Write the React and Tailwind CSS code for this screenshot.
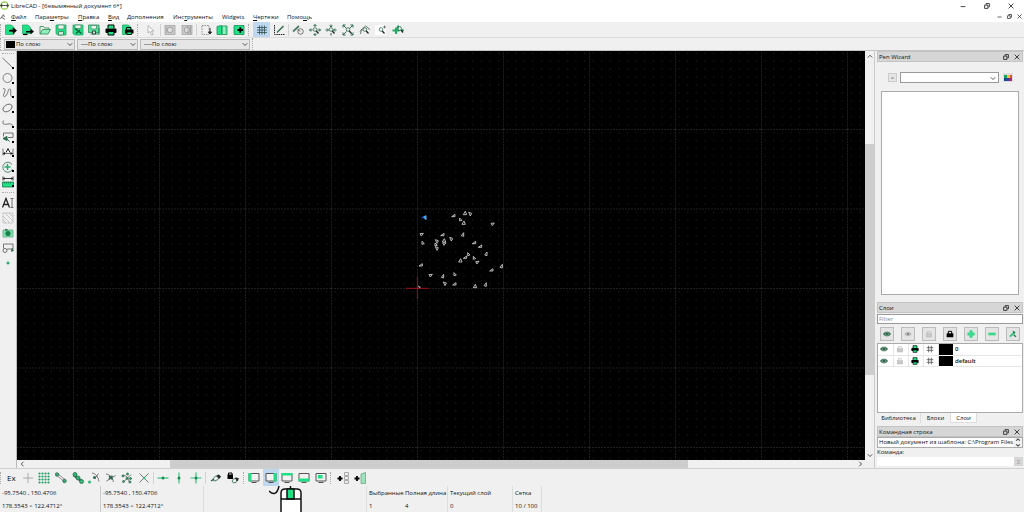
import React from "react";

const G = "#1fe085";
const D = "#2f6b4c";
const K = "#222";

function Icon({ children, size = "size-3" }) {
  return (
    <svg viewBox="0 0 24 24" className={`${size} shrink-0`} fill="none" stroke={K} strokeWidth="1.6" aria-hidden="true">
      {children}
    </svg>
  );
}

const magnifier = (
  <>
    <circle cx="12" cy="11" r="3.6" stroke={D} />
    <path d="M14.5 14l4.5 5" strokeWidth="2.6" />
  </>
);

const icons = {
  newDoc: (
    <>
      <path d="M1 2h12l5 5v14H1z" fill={G} stroke="#27b070" />
      <path d="M8 12h8v-5l8 6-8 7v-5H8z" fill="#000" stroke="none" />
      <path d="M9 13h13M17 8v11" strokeWidth="3" stroke="#000" />
    </>
  ),
  newTemplate: (
    <>
      <path d="M1 2h11l5 5v12H1z" fill={G} stroke="#27b070" />
      <path d="M8 14h9V9l7 6-7 6v-4H8z" fill="#000" stroke="none" />
      <path d="M2 21h9" stroke="#000" strokeWidth="2.4" />
    </>
  ),
  open: (
    <>
      <path d="M2 20V5h7l2 3h9v3" stroke="#27864f" />
      <path d="M2 20l5-9h16l-5 9z" fill="#8df0bd" stroke="#27864f" />
    </>
  ),
  save: (
    <>
      <path d="M2 2h20v20H5l-3-3z" fill={G} stroke="#27a565" />
      <path d="M6 2h12v8H6z" fill="#e9f5ee" stroke="#4d8d6b" />
      <path d="M7 15h10v7H7z" fill="#d0e8db" stroke="#397f5a" />
    </>
  ),
  saveAs: (
    <>
      <path d="M2 2h20v20H5l-3-3z" fill={G} stroke="#27a565" />
      <path d="M6 2h12v7H6z" fill="#e9f5ee" stroke="#4d8d6b" />
      <path d="M6 9l13 10M8 19l8-7" stroke="#14573a" strokeWidth="2.6" />
    </>
  ),
  saveAll: (
    <>
      <path d="M1 2h21v15H1z" fill="#4fe79c" stroke="#2b8c5a" />
      <path d="M6 3h11v7H6z" fill="#eef8f2" stroke="#4d8d6b" />
      <path d="M5 20h17V8" stroke="#2b8c5a" strokeWidth="2.4" />
      <path d="M9 14h6v6H9z" fill="#cfe9db" />
    </>
  ),
  print: (
    <>
      <path d="M6 9V2h12v7" fill={G} stroke="#000" strokeWidth="2" />
      <rect x="1" y="9" width="22" height="9" rx="2" fill="#000" stroke="none" />
      <path d="M6 15h12v7H6z" fill={G} stroke="#000" strokeWidth="2" />
    </>
  ),
  preview: (
    <>
      <path d="M1 2h12l4 4v15H1z" fill={G} stroke="#27a565" />
      <path d="M9 12V7h9v5" fill={G} stroke="#000" strokeWidth="2" />
      <rect x="6" y="11" width="17" height="8" rx="1" fill="#000" stroke="none" />
      <path d="M10 16h9v5h-9z" fill={G} stroke="#000" />
    </>
  ),
  pointer: <path d="M8 3v15l4-3 3 7 3-1-3-7h5z" stroke="#aaa" fill="#f8f8f8" />,
  blockGray: (
    <>
      <rect x="2" y="3" width="20" height="18" fill="#c8c8c8" stroke="#a8a8a8" />
      <circle cx="12" cy="12" r="5.5" stroke="#999" fill="#dedede" />
      <path d="M5 6v12" stroke="#aaa" />
    </>
  ),
  blockGray2: (
    <>
      <rect x="2" y="3" width="20" height="18" fill="#c8c8c8" stroke="#a8a8a8" />
      <circle cx="12" cy="12" r="5.5" stroke="#999" fill="#dedede" />
      <path d="M14 3v18M19 3v18" stroke="#999" />
    </>
  ),
  selectDown: (
    <>
      <path d="M4 3h14v18H4z" stroke="#777" strokeDasharray="3 2" />
      <path d="M20 8v10M17 16l3 4 3-4z" fill={K} strokeWidth="2" />
    </>
  ),
  book: (
    <>
      <path d="M2 5l9-2v18H2z" fill={G} stroke="#1c8b55" />
      <path d="M12 4h10v17H12z" fill="#5ce6a1" stroke="#1c8b55" />
      <path d="M16 5v15" stroke="#c8f5de" strokeWidth="2" />
    </>
  ),
  addBlock: (
    <>
      <path d="M2 3h20v18H2z" fill={G} stroke="#1c8b55" />
      <path d="M9 12h11M14.5 6.5v11" stroke="#000" strokeWidth="4" />
    </>
  ),
  grid: <path d="M7 3v18M12 3v18M17 3v18M2 7h20M2 12h20M2 17h20" stroke="#355" strokeWidth="1.7" />,
  draft: (
    <>
      <path d="M3 2v19h20" strokeDasharray="3 1.5" strokeWidth="2" />
      <path d="M8 17L21 4" stroke={D} strokeWidth="3" />
    </>
  ),
  redraw: (
    <>
      <circle cx="17" cy="15" r="5.5" stroke="#555" />
      <path d="M2 15L14 4" stroke="#4f7d66" strokeWidth="3.5" />
      <path d="M12 11l4 4" />
    </>
  ),
  zoomIn: (
    <>
      {magnifier}
      <path d="M12 1v5M12 23v-5M1 12h6M17 12h6M9 4l3-3 3 3M4 9l-3 3 3 3M20 9l3 3-3 3M9 20l3 3 3-3" stroke={D} strokeWidth="2" />
    </>
  ),
  zoomOut: (
    <>
      {magnifier}
      <path d="M12 1v5M12 23v-5M1 12h6M17 12h6M9 3l3 3 3-3M4 9l3 3-3 3M20 9l-3 3 3 3" stroke={D} strokeWidth="2" />
    </>
  ),
  zoomAuto: (
    <>
      {magnifier}
      <path d="M2 2l7 7M22 2l-7 7M2 22l7-7M22 22l-5-5M2 7V2h5M17 2h5v5M2 17v5h5M17 22h5v-5" stroke={D} strokeWidth="2" />
    </>
  ),
  zoomPrev: (
    <>
      {magnifier}
      <path d="M3 20l2-9 8-7 6 4 2 4M2 15l3-4 4 2" stroke="#4b6658" />
    </>
  ),
  zoomWin: (
    <>
      <path d="M0 2h22v20H0z" fill="#fff" stroke="none" />
      {magnifier}
      <path d="M19 3v6M16 6h6" stroke="#555" />
    </>
  ),
  zoomPan: (
    <>
      <path d="M1 13h14M8 7v13M12 3v6M20 11l3 3" stroke="#20a963" strokeWidth="4" />
      <circle cx="15" cy="9" r="4" stroke={D} />
      <path d="M18 12l4 5" strokeWidth="2.5" />
    </>
  ),
  line: <path d="M1 2l20 19" stroke="#555" />,
  circle: <circle cx="11" cy="12" r="9" stroke="#666" />,
  curve: <path d="M2 4c5-3 5 3 2 9s1 9 5 3 3-13 7-12-2 14 5 16" stroke="#555" />,
  ellipse: <ellipse cx="11" cy="12" rx="10" ry="6.5" transform="rotate(-32 11 12)" stroke="#555" />,
  polyline: <path d="M3 7c-4 9 3 8 9 7 8-1 9 1 9 5" stroke="#555" />,
  modify: (
    <>
      <path d="M3 11V4h19v9H12" stroke="#555" />
      <path d="M2 15l8-4v8zM9 15l6 6" fill={D} stroke={D} strokeWidth="2" />
    </>
  ),
  dimension: (
    <>
      <path d="M2 5v14M22 5v14M2 15h20" stroke="#555" />
      <path d="M8 13l4-8 4 8" stroke={K} strokeWidth="2" />
      <path d="M1 15l5-3v6zM22 15l-5-3v6z" fill={K} stroke="none" />
    </>
  ),
  info: (
    <>
      <path d="M20 7a10 10 0 1 0 1 9" stroke={D} />
      <path d="M11 6v12M5 12h12" stroke="#25ad6b" strokeWidth="3" />
    </>
  ),
  measure: (
    <>
      <path d="M2 1v8M22 1v8M2 5h20M5 3v4M19 3v4" strokeWidth="1.8" />
      <path d="M1 12h22v10H1z" fill={G} stroke="#15804c" />
      <path d="M5 12v3M9 12v3M13 12v3M17 12v3" stroke="#15804c" />
    </>
  ),
  mtext: (
    <>
      <path d="M1 21L8 3l7 18M4 15h8" strokeWidth="2.6" />
      <path d="M20 3v18M17 3h6M17 21h6" stroke="#555" />
    </>
  ),
  hatch: <path d="M2 2h20v20H2zM2 8l14 14M2 16l6 6M6 2l16 16M14 2l8 8" stroke="#a7a7a7" strokeDasharray="2 1" />,
  image: (
    <>
      <path d="M2 6h20v14H2z" fill="#7be0ab" stroke="#70a88a" />
      <path d="M6 4h5v3H6z" fill={D} stroke="none" />
      <circle cx="12" cy="13" r="4.5" fill="#17804a" stroke="#17804a" />
    </>
  ),
  insert: (
    <>
      <path d="M3 13V4h19v10H10" stroke="#555" />
      <circle cx="6" cy="17" r="4" stroke="#555" />
      <path d="M20 13l3 4-4 2z" fill={D} stroke={D} />
    </>
  ),
  point: <circle cx="12" cy="12" r="3" fill="#29a86c" stroke="none" />,
  cross: <path d="M12 2v20M2 12h20" stroke="#999" />,
  snapGrid: (
    <g fill="#249c62" stroke="none">
      {[3, 9, 15, 21].map((x) => [3, 9, 15, 21].map((y) => <circle key={`${x}-${y}`} cx={x} cy={y} r="2.2" />))}
    </g>
  ),
  endpoint: (
    <>
      <path d="M6 4l14 11M4 7l13 11" stroke="#777" />
      <circle cx="4" cy="5" r="3.5" fill="#39ad74" stroke={D} />
      <circle cx="19" cy="18" r="3.5" fill="#39ad74" stroke={D} />
    </>
  ),
  onEntity: (
    <>
      <path d="M3 6l17 13" stroke={D} strokeWidth="5" />
      <circle cx="6" cy="5" r="4" fill="#2dbb75" stroke={D} />
      <circle cx="12" cy="12" r="4" fill="#2dbb75" stroke={D} />
      <circle cx="19" cy="19" r="4" fill="#2dbb75" stroke={D} />
    </>
  ),
  center: (
    <>
      <path d="M8 2c7 1 12 7 14 17M13 14l8-11" stroke="#555" />
      <circle cx="3" cy="20" r="3" fill="#2dbb75" stroke="none" />
      <circle cx="13" cy="11" r="3" fill={D} stroke="none" />
    </>
  ),
  middle: (
    <>
      <path d="M2 4c8 1 13 7 15 16M3 18L21 7" stroke="#555" />
      <path d="M8 8l7 7M8 14l7-6" stroke={D} strokeWidth="3.5" />
    </>
  ),
  distance: (
    <>
      <path d="M2 7c8-2 13 4 15 15M5 20L20 5" stroke="#555" />
      <g fill="#28a868" stroke={D}>
        <circle cx="4" cy="8" r="2" /><circle cx="13" cy="4" r="2" /><circle cx="19" cy="13" r="2" />
        <circle cx="12" cy="13" r="2" /><circle cx="5" cy="19" r="2" /><circle cx="18" cy="20" r="2" />
      </g>
    </>
  ),
  intersect: (
    <>
      <path d="M3 3l18 18M21 3L3 21" stroke="#555" />
      <circle cx="12" cy="12" r="2.5" fill="#2dbb75" stroke="none" />
    </>
  ),
  restrictH: (
    <>
      <path d="M1 12h22" stroke="#35c27f" strokeWidth="2.4" />
      <circle cx="12" cy="12" r="3" fill="#178b52" stroke="none" />
    </>
  ),
  restrictV: (
    <>
      <path d="M12 1v22" stroke="#35c27f" strokeWidth="2.4" />
      <circle cx="12" cy="12" r="3" fill="#178b52" stroke="none" />
    </>
  ),
  restrictO: (
    <>
      <path d="M12 1v22M1 12h22" stroke="#35c27f" strokeWidth="2.4" />
      <circle cx="12" cy="12" r="3" fill="#178b52" stroke="none" />
    </>
  ),
  relZero: (
    <>
      <path d="M2 18l6-4" stroke={D} strokeWidth="3" />
      <ellipse cx="13" cy="12" rx="8" ry="4" transform="rotate(-35 13 12)" stroke={D} />
      <path d="M14 9l4 4 3-4-4-3z" fill={K} />
    </>
  ),
  lockZero: (
    <>
      <rect x="1" y="5" width="11" height="9" fill="#000" stroke="none" />
      <path d="M3 6V2h7v4" stroke="#000" strokeWidth="2" />
      <ellipse cx="16" cy="17" rx="6" ry="4" transform="rotate(-30 16 17)" stroke={D} />
      <path d="M17 12l3 6 3-5z" fill={K} />
    </>
  ),
  plusList: (
    <>
      <path d="M1 13h10M6 8v10" stroke="#000" strokeWidth="3.6" />
      <path d="M15 1h8v6h-8zM15 9h8v6h-8zM15 17h8v6h-8z" fill="#ececec" stroke="#999" />
    </>
  ),
  plusGreen: (
    <>
      <path d="M1 13h10M6 8v10" stroke="#000" strokeWidth="3.6" />
      <path d="M14 4l9-3v22h-9z" fill="#9be3bd" stroke="#69a886" />
    </>
  ),
  eye: (
    <>
      <path d="M1 12c5-8 17-8 22 0-5 8-17 8-22 0z" fill="#39805c" stroke="#2c5b44" />
      <circle cx="12" cy="12" r="4" fill="#0b2a1a" stroke="#b5d8c5" />
    </>
  ),
  eyeGray: (
    <>
      <path d="M2 12c5-7 15-7 20 0-5 7-15 7-20 0z" fill="#bbb" stroke="#aaa" />
      <circle cx="12" cy="12" r="3" fill="#777" stroke="none" />
    </>
  ),
  lockGray: (
    <>
      <rect x="4" y="11" width="16" height="10" fill="#c9c9c9" stroke="#b5b5b5" />
      <path d="M7 11V5h9v3" stroke="#b5b5b5" strokeWidth="2" />
    </>
  ),
  lock: (
    <>
      <rect x="2" y="10" width="20" height="12" rx="1" fill="#000" stroke="none" />
      <path d="M7 11V4h10v7" stroke="#000" strokeWidth="3" />
    </>
  ),
  plus: <path d="M12 1v22M1 12h22" stroke="#38d98a" strokeWidth="9" />,
  minus: <path d="M1 12h22" stroke="#38d98a" strokeWidth="8" />,
  edit: (
    <>
      <path d="M3 20L17 6" stroke="#38c27f" strokeWidth="6" />
      <path d="M12 4l6 6M14 14l7 6" stroke="#217d4e" strokeWidth="4" />
    </>
  ),
  hash: <path d="M8 2v20M16 2v20M2 8h20M2 16h20" stroke="#555" strokeWidth="2.4" />,
};

function monitor(fill) {
  return (
    <>
      <path d="M2 3h20v15H2z" fill="#f2f2f2" stroke="#555" strokeWidth="2" />
      <path d={fill} fill={G} stroke="none" />
      <path d="M7 21h10" stroke="#555" strokeWidth="2" />
    </>
  );
}
icons.dockLeft = monitor("M1 2h6v17H1z");
icons.dockRight = monitor("M17 2h6v17h-6z");
icons.dockTop = monitor("M1 2h22v5H1z");
icons.dockBottom = monitor("M1 13h22v6H1z");
icons.dockFloat = monitor("M6 6h9v7H6z");

function Tool({ name, label, active, menu }) {
  return (
    <button
      type="button"
      aria-label={label}
      aria-pressed={active}
      className={`relative flex min-w-0 flex-1 items-center justify-center ${active ? "bg-[#bfd8f0]" : ""}`}
    >
      {name ? <Icon>{icons[name]}</Icon> : <span className="text-[8px]">{label}</span>}
      {menu && <span className="absolute right-0.5 bottom-0.5 size-[2px] bg-black" />}
    </button>
  );
}

const Handle = () => <span className="h-3 w-[2px] shrink-0 border-l border-dotted border-[#aaa]" />;
const Sep = () => <span className="h-3 w-px shrink-0 bg-[#d2d2d2]" />;

function Group({ width, items }) {
  return (
    <div className={`flex h-full shrink-0 ${width}`}>
      {items.map(([name, label, active]) => (
        <Tool key={label} name={name} label={label} active={active} />
      ))}
    </div>
  );
}

const Chevron = ({ d = "M1 3l3 3 3-3" }) => (
  <svg viewBox="0 0 8 8" className="size-[6px] shrink-0" fill="none" stroke="#444" strokeWidth="1.2" aria-hidden="true">
    <path d={d} />
  </svg>
);

function PenCombo({ width, label, children }) {
  return (
    <div className={`relative flex h-[11px] items-center border border-[#b9b9b9] bg-[#e6e6e6] px-px ${width}`}>
      {children}
      <select aria-label={label} className="h-full min-w-0 flex-1 appearance-none bg-transparent leading-none outline-none">
        <option>По слою</option>
      </select>
      <Chevron />
    </div>
  );
}

const RestoreGlyph = ({ size = "size-[6px]" }) => (
  <svg viewBox="0 0 10 10" className={size} fill="none" stroke="#222" strokeWidth="1.4" aria-hidden="true">
    <path d="M1 3.5h5.5V9H1zM3.5 3V1H9v5.5H7" />
  </svg>
);
const CloseGlyph = ({ size = "size-[6px]" }) => (
  <svg viewBox="0 0 10 10" className={size} fill="none" stroke="#222" strokeWidth="1.4" aria-hidden="true">
    <path d="M1 1l8 8M9 1L1 9" />
  </svg>
);
const MinGlyph = ({ size = "size-[6px]" }) => (
  <svg viewBox="0 0 10 10" className={size} fill="none" stroke="#222" strokeWidth="1.4" aria-hidden="true">
    <path d="M1 6h8" />
  </svg>
);

function DockTitle({ title }) {
  return (
    <div className="flex h-[11px] shrink-0 items-center border border-[#c3c3c3] bg-[#d6d6d6] pr-0.5 pl-px">
      <h2 className="flex-1">{title}</h2>
      <button type="button" aria-label={`Открепить ${title}`} className="mr-[5px]"><RestoreGlyph /></button>
      <button type="button" aria-label={`Закрыть ${title}`}><CloseGlyph /></button>
    </div>
  );
}

const menus = [
  ["Ф", "айл", "w-[24px]"], ["", "Параметры", "w-[43px]", "м"], ["П", "равка", "w-[30px]"], ["В", "ид", "w-[19px]"],
  ["Д", "ополнения", "w-[46px]"], ["", "Инструменты", "w-[49px]", "т"], ["", "Widgets", "w-[31px]", ""], ["Ч", "ертежи", "w-[34px]"], ["", "Помощь", "w-[30px]", "щ"],
];

function MenuText({ item }) {
  const [first, rest, , inner] = item;
  if (!inner) return <>{first && <u>{first}</u>}{rest}</>;
  const at = rest.indexOf(inner);
  return <>{rest.slice(0, at)}<u>{inner}</u>{rest.slice(at + 1)}</>;
}

const shapes = [
  [161, 47, 0], [195, 39, 1], [210, 42, 2], [182, 59, 3], [191, 68, 1], [278, 73, 4], [65, 104, 4], [69, 129, 3],
  [128, 104, 0], [110, 124, 2], [132, 121, 1], [133, 132, 4], [153, 117, 2], [108, 134, 3], [110, 145, 2],
  [188, 104, 5], [223, 128, 0], [241, 139, 0], [258, 162, 5], [206, 163, 3], [196, 172, 0], [181, 181, 1],
  [223, 174, 3], [232, 188, 4], [304, 199, 5], [275, 210, 0], [63, 195, 0], [92, 227, 4], [128, 229, 5],
  [165, 223, 3], [134, 251, 2], [164, 252, 0], [225, 258, 1], [256, 254, 5],
];
const outlines = [
  "M-6 3L4 -4L4 3Z", "M-5 5L1 -5L5 5Z", "M-4 -5L5 -2L1 6Z", "M-3 -5L4 2L-3 4Z", "M-5 -3L5 -4L-1 4Z", "M-4 3L3 -6L3 5Z",
];

function Drawing() {
  return (
    <svg className="min-h-0 w-full flex-1 bg-black" role="img" aria-label="Чертёж">
      <defs>
        <pattern id="minor" width="8.6" height="7.95" x="4.1" y="6.1" patternUnits="userSpaceOnUse">
          <rect x="4" y="3.5" width="1" height="1" fill="#2c2c2c" />
        </pattern>
        <pattern id="major" width="86" height="79.5" x="56" y="78" patternUnits="userSpaceOnUse">
          <path d="M0.5 0V80M0 0.5H86" stroke="#1f1f1f" strokeDasharray="2 1" />
        </pattern>
      </defs>
      <rect width="100%" height="100%" fill="url(#minor)" />
      <rect width="100%" height="100%" fill="url(#major)" />
      <g transform="translate(383 149) scale(0.3333)" fill="none" stroke="#d4d4d4" strokeWidth="2.6">
        {shapes.map(([x, y, k]) => (
          <path key={`${x}-${y}`} d={outlines[k]} transform={`translate(${x} ${y})`} />
        ))}
        <path d="M70 51l8-4v12z" stroke="#4db4ff" fill="#2f9cf5" strokeWidth="3" />
        <path d="M64 53h5" stroke="#0d2fae" strokeWidth="5" />
        <path d="M54 258l7 4-5 2" />
        <path d="M18 265h68M52 230v68" stroke="#a01212" strokeWidth="3" />
      </g>
    </svg>
  );
}

const drawTools = [
  ["line", "Линия"], ["circle", "Окружность"], ["curve", "Кривая"], ["ellipse", "Эллипс"], ["polyline", "Полилиния"],
  ["modify", "Изменить"], ["dimension", "Размер"], ["info", "Информация"], ["measure", "Измерение"],
];
const extraTools = [["mtext", "Текст"], ["hatch", "Штриховка"], ["image", "Изображение"], ["insert", "Вставка"], ["point", "Точка"]];

const layerButtons = [
  ["eye", "Показать все"], ["eyeGray", "Скрыть все"], ["lockGray", "Разблокировать"], ["lock", "Заблокировать"],
  ["plus", "Добавить слой"], ["minus", "Удалить слой"], ["edit", "Изменить слой"],
];

function Stat({ className, top, bottom }) {
  return (
    <div className={`flex shrink-0 flex-col justify-around pt-px pl-0.5 whitespace-nowrap ${className}`}>
      <span>{top}</span>
      <span>{bottom}</span>
    </div>
  );
}

export default function App() {
  return (
    <div className="flex h-screen flex-col overflow-hidden bg-[#f0f0f0] font-['Open_Sans','Noto_Sans',sans-serif] text-[6px] leading-[10px] text-[#111]">
      <header className="shrink-0 bg-white">
        <div className="flex h-[11px] items-center pr-[10px]">
          <svg viewBox="0 0 16 16" className="mr-[2px] size-[9px]" fill="none" aria-hidden="true">
            <circle cx="8" cy="8" r="6.5" stroke="#8cc63f" strokeWidth="2" />
            <path d="M0 8h16M3 5v6M13 5v6" stroke="#333" strokeWidth="1.5" />
          </svg>
          <h1 className="flex-1">LibreCAD - [безымянный документ 6*]</h1>
          <div className="flex items-center gap-[18px]">
            <button type="button" aria-label="Свернуть"><MinGlyph /></button>
            <button type="button" aria-label="Развернуть"><RestoreGlyph /></button>
            <button type="button" aria-label="Закрыть"><CloseGlyph /></button>
          </div>
        </div>
        <div className="flex h-[11px] items-center pr-0.5">
          <svg viewBox="0 0 16 16" className="mr-[5px] size-[6px]" fill="none" stroke="#333" strokeWidth="2" aria-hidden="true">
            <path d="M1 13L9 2l3 6M4 9l9 5" />
          </svg>
          <nav className="flex flex-1">
            {menus.map((m) => (
              <button type="button" key={m[1]} className={`shrink-0 text-left whitespace-nowrap ${m[2]}`}>
                <MenuText item={m} />
              </button>
            ))}
          </nav>
          <div className="flex items-center gap-[5px]">
            <button type="button" aria-label="Свернуть документ"><MinGlyph size="size-[5px]" /></button>
            <button type="button" aria-label="Восстановить документ"><RestoreGlyph size="size-[5px]" /></button>
            <button type="button" aria-label="Закрыть документ"><CloseGlyph size="size-[5px]" /></button>
          </div>
        </div>
      </header>

      <div className="flex h-4 shrink-0 items-center gap-px border-b border-[#dcdcdc]">
        <Handle />
        <Group
          width="w-[133px]"
          items={[
            ["newDoc", "Новый"], ["newTemplate", "Новый из шаблона"], ["open", "Открыть"], ["save", "Сохранить"],
            ["saveAs", "Сохранить как"], ["saveAll", "Сохранить все"], ["print", "Печать"], ["preview", "Просмотр"],
          ]}
        />
        <Handle />
        <Group width="w-[19px]" items={[["pointer", "Выбор"]]} />
        <Sep />
        <Group width="w-[33px]" items={[["blockGray", "Блок"], ["blockGray2", "Править блок"]]} />
        <Sep />
        <Group width="w-[49px]" items={[["selectDown", "Выделить"], ["book", "Библиотека блоков"], ["addBlock", "Добавить блок"]]} />
        <Handle />
        <span className="w-px" />
        <Group width="w-[34px]" items={[["grid", "Сетка", true], ["draft", "Черновик"]]} />
        <Sep />
        <Group
          width="w-[116px]"
          items={[
            ["redraw", "Перерисовать"], ["zoomIn", "Увеличить"], ["zoomOut", "Уменьшить"], ["zoomAuto", "Автомасштаб"],
            ["zoomPrev", "Предыдущий вид"], ["zoomWin", "Масштаб окна"], ["zoomPan", "Панорама"],
          ]}
        />
      </div>

      <div className="flex h-[13px] shrink-0 items-center gap-[2px] border-b border-[#c4c4c4]">
        <Handle />
        <PenCombo width="w-[71px]" label="Цвет"><span className="mr-px h-[7px] w-[9px] shrink-0 bg-black" /></PenCombo>
        <PenCombo width="w-[61px]" label="Толщина"><span className="ml-0.5 h-px w-[7px] shrink-0 bg-[#999]" /></PenCombo>
        <PenCombo width="w-[110px]" label="Тип линии"><span className="ml-0.5 h-px w-[8px] shrink-0 bg-[#999]" /></PenCombo>
        <Handle />
      </div>

      <main className="flex min-h-0 flex-1">
        <aside className="flex w-[17px] shrink-0 flex-col items-center border-r border-[#bbb] pt-0.5">
          <span className="mb-0.5 w-3 border-t border-dotted border-[#aaa]" />
          <div className="flex h-[133px] w-[15px] flex-col">
            {drawTools.map(([n, l]) => <Tool key={l} name={n} label={l} menu />)}
          </div>
          <span className="my-[3px] w-3 border-t border-dotted border-[#aaa]" />
          <div className="flex h-[74px] w-[15px] flex-col">
            {extraTools.map(([n, l]) => <Tool key={l} name={n} label={l} />)}
          </div>
        </aside>

        <section className="flex min-w-0 flex-1 flex-col">
          <div className="flex min-h-0 flex-1">
            <div className="flex min-w-0 flex-1 flex-col"><Drawing /></div>
            <div className="flex w-[9px] flex-col items-center bg-[#f0f0f0]">
              <span className="flex h-[10px] items-center"><Chevron d="M1 6l3-3 3 3" /></span>
              <span className="flex-[83]" />
              <span className="w-full flex-[232] bg-[#cdcdcd]" />
              <span className="flex-[75]" />
              <span className="flex h-[10px] items-center"><Chevron /></span>
            </div>
          </div>
          <div className="flex h-[8px] shrink-0 items-center bg-[#f0f0f0] pr-[9px]">
            <span className="flex w-[10px] justify-center"><Chevron d="M6 1L3 4l3 3" /></span>
            <span className="flex-[143]" />
            <span className="h-full flex-[518] bg-[#cdcdcd]" />
            <span className="flex-[167]" />
            <span className="flex w-[10px] justify-center"><Chevron d="M3 1l3 3-3 3" /></span>
          </div>
        </section>

        <aside className="flex w-[150px] shrink-0 flex-col border-l border-[#ccc] pr-px pl-0.5">
          <DockTitle title="Pen Wizard" />
          <div className="flex h-[29px] shrink-0 items-center pr-[10px] pl-[11px]">
            <button type="button" aria-label="Добавить цвет" className="mt-[2px] flex size-[9px] items-center justify-center border border-[#ccc] bg-[#e4e4e4] text-[#888]">=</button>
            <div className="mt-[2px] ml-[3px] flex h-[11px] flex-1 items-center border border-[#999] bg-white pr-0.5">
              <select aria-label="Цвет пера" className="h-full min-w-0 flex-1 appearance-none bg-transparent outline-none" />
              <Chevron />
            </div>
            <button type="button" aria-label="Выбрать цвет" className="mt-[2px] ml-1 flex h-[9px] w-[10px] items-center justify-center bg-[#ddd]">
              <svg viewBox="0 0 8 6" className="h-[6px] w-2" aria-hidden="true">
                <path d="M0 0h3v3H0z" fill="#17a35c" /><path d="M3 0h3v3H3z" fill="#f0c433" /><path d="M6 0h2v3H6z" fill="#d4553a" />
                <path d="M0 3h3v3H0z" fill="#184a8c" /><path d="M3 3h3v3H3z" fill="#55359c" /><path d="M6 3h2v3H6z" fill="#b02a6d" />
              </svg>
            </button>
          </div>
          <div className="mx-1 min-h-0 flex-1 border border-[#aaa] bg-white" />
          <div className="h-[7px] shrink-0" />
          <DockTitle title="Слои" />
          <input aria-label="Фильтр" placeholder="Filter" className="mt-px h-[10px] w-full shrink-0 border border-[#999] bg-white px-px leading-none outline-none placeholder:text-[#888]" />
          <div className="flex h-[19px] shrink-0 items-center justify-between px-[3px]">
            {layerButtons.map(([n, l]) => (
              <button type="button" key={l} aria-label={l} className="flex size-[14px] items-center justify-center border border-[#bcbcbc] bg-[#e4e4e4]">
                <Icon size="size-2">{icons[n]}</Icon>
              </button>
            ))}
          </div>
          <div className="h-[70px] shrink-0 border border-[#aaa] bg-white">
            <table className="w-full table-fixed border-collapse font-semibold">
              <tbody>
                {["0", "default"].map((name) => (
                  <tr key={name} className="h-[11px]">
                    {["eye", "lockGray", "print", "hash"].map((n) => (
                      <td key={n} className="w-[15px] border-r border-b border-[#e6e6e6] p-0 pr-0.5">
                        <span className="flex justify-center"><Icon size="size-2">{icons[n]}</Icon></span>
                      </td>
                    ))}
                    <td className="w-[15px] border-b border-white bg-black p-0" />
                    <td className="border-b border-[#e6e6e6] p-0 pl-[2px]">{name}</td>
                  </tr>
                ))}
              </tbody>
            </table>
          </div>
          <div className="flex h-[11px] shrink-0 items-start">
            <button type="button" className="h-[10px] w-[44px] border-r border-[#ddd]">Библиотека</button>
            <button type="button" className="h-[10px] w-[29px]">Блоки</button>
            <button type="button" className="h-[10px] w-[27px] border border-t-0 border-[#ddd] bg-white">Слои</button>
          </div>
          <div className="h-0.5 shrink-0" />
          <DockTitle title="Командная строка" />
          <div className="flex h-[11px] shrink-0 overflow-hidden border border-[#aaa] bg-white pl-px leading-[8px]">
            <div className="min-w-0 flex-1 overflow-hidden whitespace-nowrap">
              Новый документ из шаблона: C:\Program Files
              <br />
              (x86)\LibreCAD\resources
            </div>
            <svg viewBox="0 0 8 10" className="h-[9px] w-2 shrink-0 bg-[#f0f0f0]" fill="none" stroke="#444" strokeWidth="1.2" aria-hidden="true">
              <path d="M2 3l2-2 2 2M2 7l2 2 2-2" />
            </svg>
          </div>
          <label htmlFor="cmd" className="h-[9px] shrink-0 leading-[9px]">Команда:</label>
          <div className="flex h-[11px] shrink-0 items-start pb-0.5">
            <input id="cmd" className="h-[9px] min-w-0 flex-1 bg-white outline-none" />
            <button type="button" aria-label="Меню команд" className="flex size-[9px] items-center justify-center bg-[#d6d6d6] text-[#999]">≡</button>
          </div>
        </aside>
      </main>

      <div className="flex h-[18px] shrink-0 items-center gap-px border-t border-[#d0d0d0]">
        <Handle />
        <Group
          width="w-[149px]"
          items={[
            [null, "Ex"], ["cross", "Свободная привязка"], ["snapGrid", "К сетке"], ["endpoint", "К концам"], ["onEntity", "К объекту"],
            ["center", "К центру"], ["middle", "К середине"], ["distance", "На расстоянии"], ["intersect", "К пересечению"],
          ]}
        />
        <Sep />
        <Group width="w-[49px]" items={[["restrictH", "Горизонталь"], ["restrictV", "Вертикаль"], ["restrictO", "Ортогональ"]]} />
        <Sep />
        <Group width="w-[35px]" items={[["relZero", "Относительный ноль"], ["lockZero", "Закрепить ноль"]]} />
        <Handle />
        <Group
          width="w-[83px]"
          items={[
            ["dockLeft", "Левая панель"], ["dockRight", "Правая панель", true], ["dockTop", "Верхняя панель"],
            ["dockBottom", "Нижняя панель"], ["dockFloat", "Плавающая панель"],
          ]}
        />
        <Handle />
        <span className="w-px" />
        <Group width="w-[33px]" items={[["plusList", "Создать меню"], ["plusGreen", "Создать панель"]]} />
      </div>

      <footer className="flex h-[26px] shrink-0">
        <Stat className="w-[101px] border-r border-[#ccc]" top="-95.7540 , 150.4706" bottom={'178.3543 < 122.4712°'} />
        <Stat className="w-[103px] border-r border-[#ddd]" top="-95.7540 , 150.4706" bottom={'178.3543 < 122.4712°'} />
        <div className="flex w-[163px] shrink-0 justify-center overflow-hidden border-r border-[#ddd] pl-[2px]">
          <svg viewBox="0 0 34 26" className="h-[26px] w-[34px]" fill="none" stroke="#111" strokeWidth="1.5" aria-hidden="true">
            <path d="M0 5c4 4 8 4 10-5" />
            <path d="M12 27V7q0-4 4-4h12q4 0 4 4v20" fill="#fff" />
            <path d="M18 3h7v10h-7z" fill={G} />
            <path d="M12 13h20M21.5 0v3" />
          </svg>
        </div>
        <Stat className="w-[36px]" top="Выбранные" bottom="1" />
        <Stat className="w-[45px] border-r border-[#ddd]" top="Полная длина" bottom="4" />
        <Stat className="w-[65px] border-r border-[#ddd]" top="Текущий слой" bottom="0" />
        <Stat className="w-[29px] border-r border-[#ddd]" top="Сетка" bottom="10 / 100" />
      </footer>
    </div>
  );
}
